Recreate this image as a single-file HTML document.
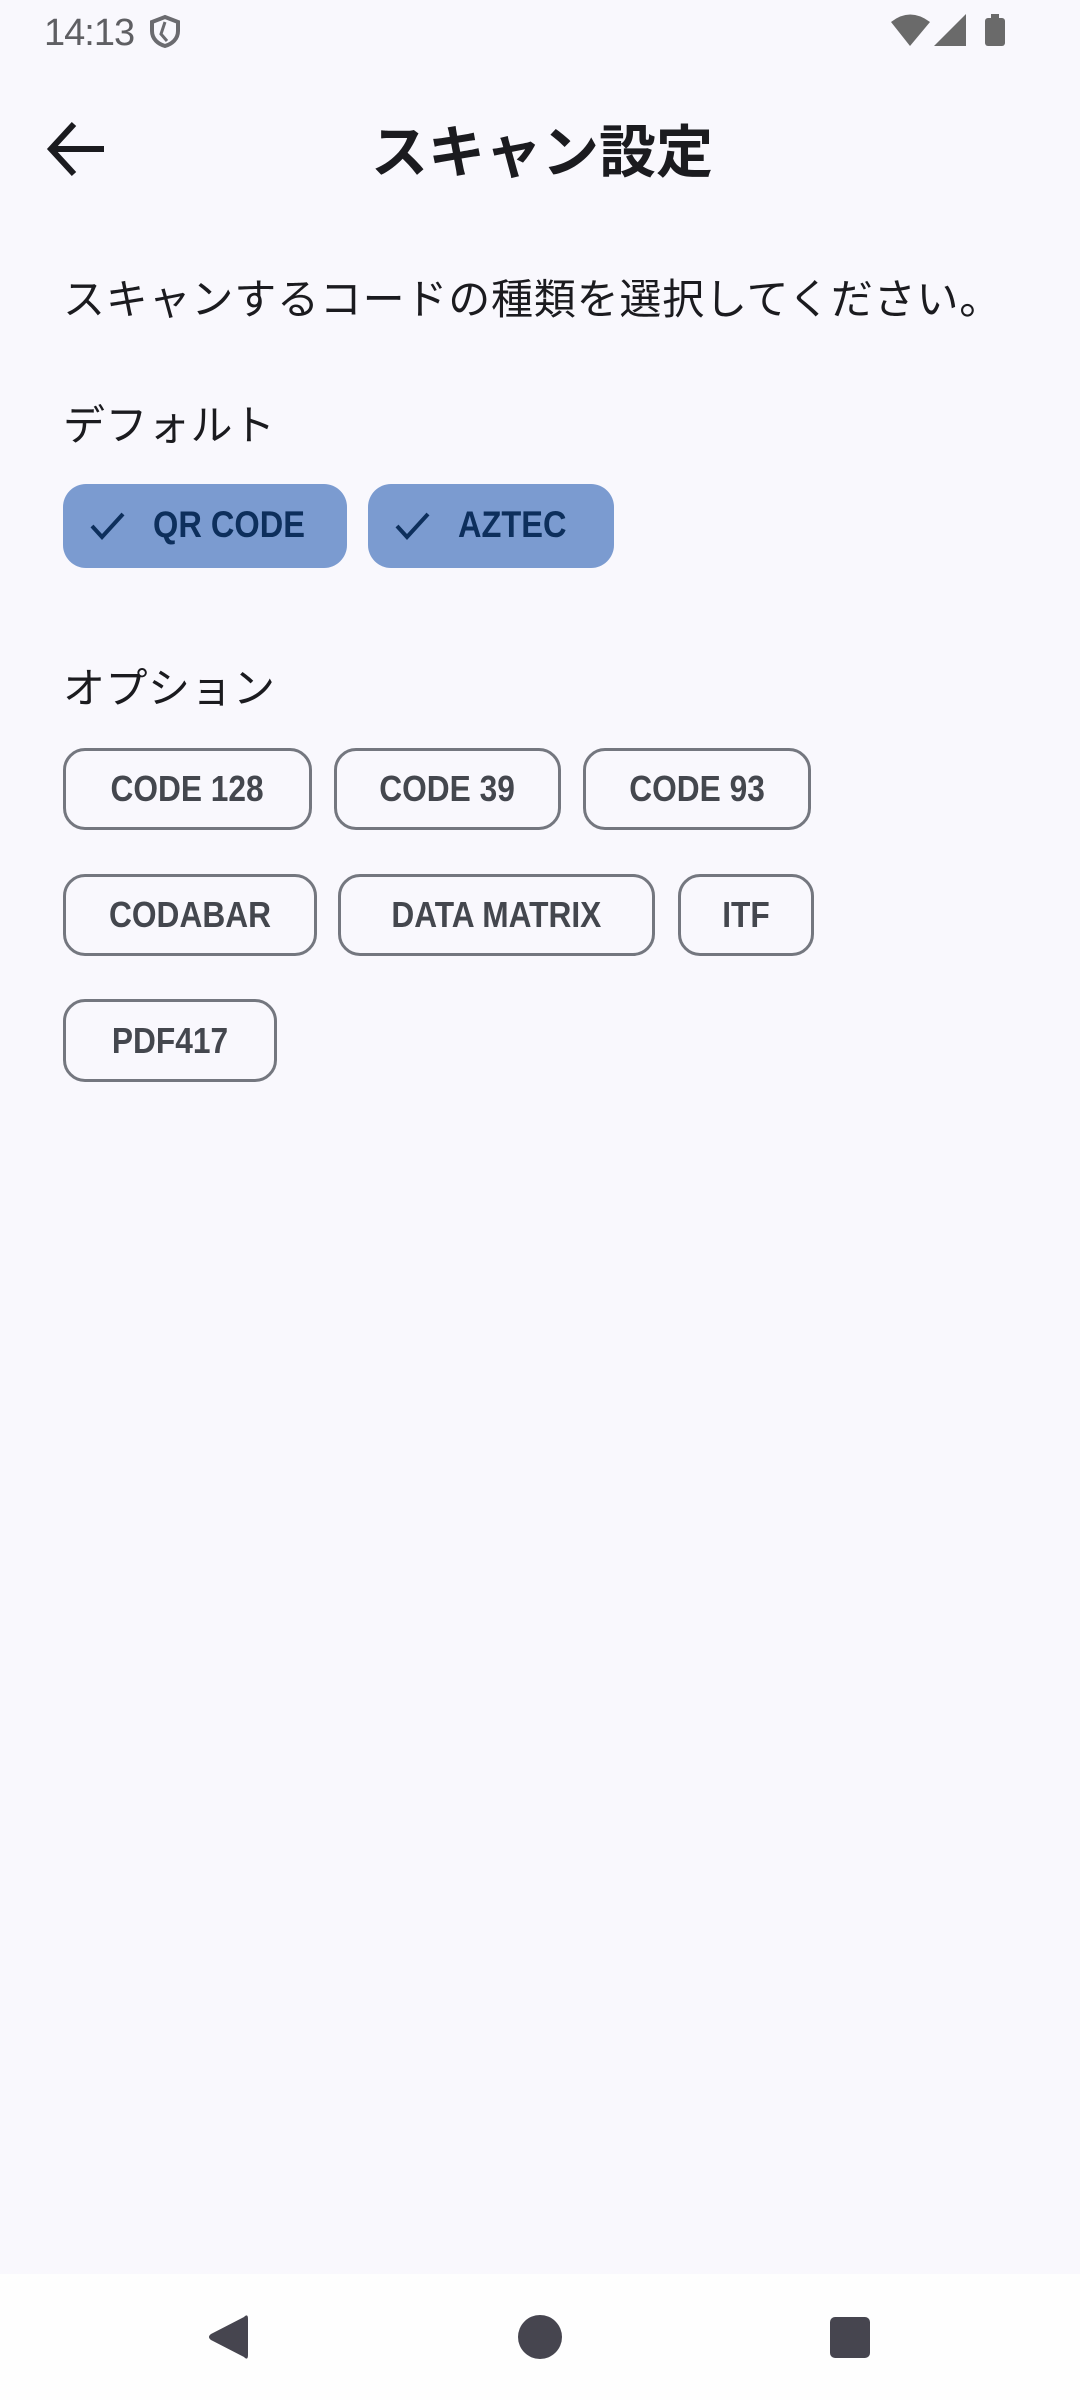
<!DOCTYPE html>
<html><head><meta charset="utf-8"><style>
*{margin:0;padding:0;box-sizing:border-box}
body{width:1080px;height:2400px;background:#f9f8fd;position:relative;overflow:hidden;font-family:"Liberation Sans","Noto Sans CJK JP",sans-serif}
.a{position:absolute}
.chip{position:absolute;border:3px solid #74777f;border-radius:22px;display:flex;align-items:center;justify-content:center;font-size:36px;color:#44474e;font-weight:700}
.chip span,.sel span{display:inline-block;transform:scaleX(0.88);transform-origin:center}
.sel{position:absolute;background:#7b9bd0;border-radius:23px;font-size:37px;color:#0d2f5c;font-weight:700}
.sel span{transform-origin:left}
.jp{font-family:"Noto Sans CJK JP",sans-serif;color:#1b1b1f}
</style></head><body>
<div class="a" style="left:44px;top:12px;font-size:38px;color:#5f5f63;letter-spacing:-1px">14:13</div>
<svg class="a" style="left:147px;top:14px" width="36" height="34" viewBox="0 0 36 34"><path d="M18 3 L31 8 V17 C31 25 25 30 18 32 C11 30 5 25 5 17 V8 Z" fill="none" stroke="#6b6b6f" stroke-width="4"/><path d="M18 8 L14 20 L20 27" fill="none" stroke="#6b6b6f" stroke-width="3"/></svg>
<svg class="a" style="left:889px;top:12px" width="120" height="38" viewBox="0 0 120 38"><path d="M2 10 Q21 -5 41 10 L21 34 Z" fill="#6a6a6a"/><path d="M45 34 L77 2 V34 Z" fill="#6a6a6a"/><rect x="96" y="6" width="20" height="28" rx="3" fill="#6a6a6a"/><rect x="102" y="2" width="8" height="6" fill="#6a6a6a"/></svg>
<svg class="a" style="left:44px;top:118px" width="64" height="62" viewBox="0 0 64 62"><path d="M60 31 H8 M30 6 L7 31 L30 56" fill="none" stroke="#1b1b1f" stroke-width="6"/></svg>
<div class="a jp" style="left:0;width:1080px;text-align:center;top:107px;font-size:57px;font-weight:700;padding-left:4px">スキャン設定</div>
<div class="a jp" style="left:63px;top:266px;font-size:42px;letter-spacing:0.8px">スキャンするコードの種類を選択してください。</div>
<div class="a jp" style="left:63px;top:392px;font-size:42px;letter-spacing:0.5px">デフォルト</div>
<div class="sel" style="left:63px;top:484px;width:284px;height:84px"><svg class="a" style="left:27px;top:28px" width="36" height="28" viewBox="0 0 36 28"><path d="M2 14 L12 25 L33 2" fill="none" stroke="#0d2f5c" stroke-width="4"/></svg><span class="a" style="left:90px;top:20px">QR CODE</span></div>
<div class="sel" style="left:368px;top:484px;width:246px;height:84px"><svg class="a" style="left:27px;top:28px" width="36" height="28" viewBox="0 0 36 28"><path d="M2 14 L12 25 L33 2" fill="none" stroke="#0d2f5c" stroke-width="4"/></svg><span class="a" style="left:90px;top:20px">AZTEC</span></div>
<div class="a jp" style="left:63px;top:655px;font-size:42px;letter-spacing:0.5px">オプション</div>
<div class="chip" style="left:63px;top:748px;width:249px;height:82px"><span>CODE 128</span></div>
<div class="chip" style="left:334px;top:748px;width:227px;height:82px"><span>CODE 39</span></div>
<div class="chip" style="left:583px;top:748px;width:228px;height:82px"><span>CODE 93</span></div>
<div class="chip" style="left:63px;top:874px;width:254px;height:82px"><span>CODABAR</span></div>
<div class="chip" style="left:338px;top:874px;width:317px;height:82px"><span>DATA MATRIX</span></div>
<div class="chip" style="left:678px;top:874px;width:136px;height:82px"><span>ITF</span></div>
<div class="chip" style="left:63px;top:999px;width:214px;height:83px"><span>PDF417</span></div>
<div class="a" style="left:0;top:2274px;width:1080px;height:126px;background:#fefefe"></div>
<svg class="a" style="left:205px;top:2313px" width="46" height="48" viewBox="0 0 46 48"><path d="M39 4 Q43 0 43 6 V42 Q43 48 39 44 L6 27 Q2 24 6 21 Z" fill="#46454f"/></svg>
<div class="a" style="left:518px;top:2315px;width:44px;height:44px;border-radius:50%;background:#46454f"></div>
<div class="a" style="left:830px;top:2317px;width:40px;height:41px;border-radius:5px;background:#46454f"></div>
</body></html>
